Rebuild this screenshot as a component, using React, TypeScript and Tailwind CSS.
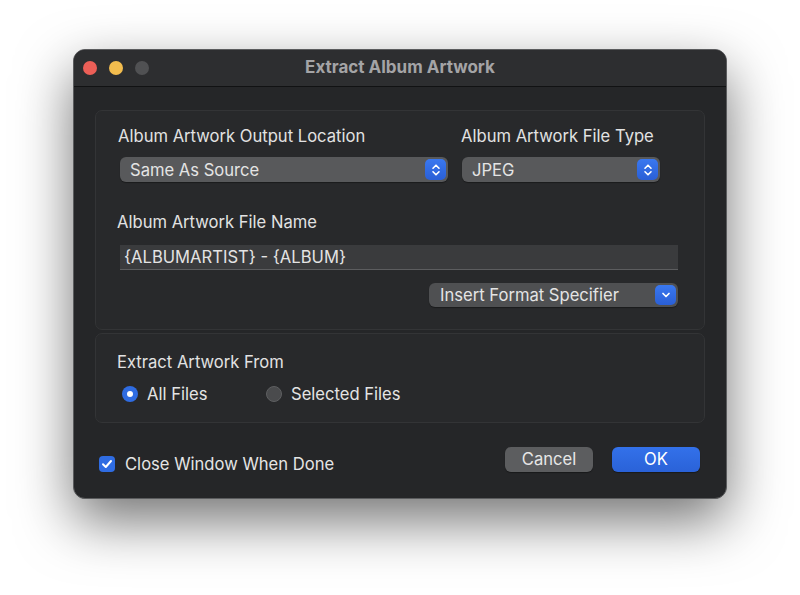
const font = { fontFamily: 'Inter, "Liberation Sans", Arial, sans-serif' };

const Stepper = () => (
	<div className="flex h-[21px] w-[21px] items-center justify-center rounded-[5px] bg-gradient-to-b from-[#3a78f0] to-[#2a5fd6]">
		<svg width="10" height="14" viewBox="0 0 10 14" fill="none">
			<path d="M2 5.2 L5 2.2 L8 5.2" stroke="white" strokeWidth="1.6" strokeLinecap="round" strokeLinejoin="round" />
			<path d="M2 8.8 L5 11.8 L8 8.8" stroke="white" strokeWidth="1.6" strokeLinecap="round" strokeLinejoin="round" />
		</svg>
	</div>
);

const ChevronBtn = () => (
	<div className="flex h-[20px] w-[21px] items-center justify-center rounded-[5px] bg-gradient-to-b from-[#3a78f0] to-[#2a5fd6]">
		<svg width="10" height="8" viewBox="0 0 10 8" fill="none">
			<path d="M2 2.5 L5 5.5 L8 2.5" stroke="white" strokeWidth="1.7" strokeLinecap="round" strokeLinejoin="round" />
		</svg>
	</div>
);

const PopUp = ({ label, width }: { label: string; width: string }) => (
	<div className={`flex h-[25px] items-center justify-between rounded-[6px] bg-[#58595b] pl-[10px] pr-[2px] shadow-[0_1px_1px_rgba(0,0,0,0.35)] ${width}`}>
		<span className="text-[16.6px] leading-[20px] text-[#e4e4e4]">{label}</span>
		<Stepper />
	</div>
);

export default function App() {
	return (
		<div className="h-[595px] w-[800px] bg-white pt-[49px]" style={font}>
			<div className="mx-auto w-[654px] overflow-hidden rounded-[12px] border border-[#5b5c5e] bg-[#252628] shadow-[0_22px_55px_rgba(0,0,0,0.55)]">
				{/* Title bar */}
				<div className="relative flex h-[37px] items-center border-b border-[#111213] bg-[#2d2e30] px-[9px]">
					<div className="flex gap-[12px]">
						<span className="h-[14px] w-[14px] rounded-full bg-[#ec5f57]" />
						<span className="h-[14px] w-[14px] rounded-full bg-[#f3bd4e]" />
						<span className="h-[14px] w-[14px] rounded-full bg-[#505153]" />
					</div>
					<div className="absolute inset-0 flex items-center justify-center pb-[1px] text-[17px] font-bold text-[#a4a4a6]">
						Extract Album Artwork
					</div>
				</div>

				<div className="px-[21px] pt-[23px]">
					{/* Output panel */}
					<div className="h-[220px] rounded-[7px] border border-[#333436] bg-[#28292b] pl-[24px] pr-[26px] pt-[15px]">
						<div className="flex gap-[14px]">
							<div className="w-[328px]">
								<div className="-ml-[2px] text-[16.6px] leading-[20px] text-[#e2e2e2]">Album Artwork Output Location</div>
								<div className="mt-[11px]">
									<PopUp label="Same As Source" width="w-[328px]" />
								</div>
							</div>
							<div className="w-[198px]">
								<div className="-ml-[1px] text-[16.6px] leading-[20px] text-[#e2e2e2]">Album Artwork File Type</div>
								<div className="mt-[11px]">
									<PopUp label="JPEG" width="w-[198px]" />
								</div>
							</div>
						</div>
						<div className="-ml-[3px] mt-[30px] text-[16.6px] leading-[20px] text-[#e2e2e2]">Album Artwork File Name</div>
						<div className="mt-[13px] flex h-[25px] items-center border-b border-[#5c5d5f] bg-[#3a3b3d] pl-[4px] text-[16.6px] text-[#e4e4e4]">
							{"{ALBUMARTIST} - {ALBUM}"}
						</div>
						<div className="mt-[13px] flex justify-end">
							<div className="flex h-[24px] w-[249px] items-center justify-between rounded-[6px] bg-[#4f5052] pl-[11px] pr-[2px] shadow-[0_1px_1px_rgba(0,0,0,0.35)]">
								<span className="text-[16.6px] leading-[20px] text-[#e4e4e4]">Insert Format Specifier</span>
								<ChevronBtn />
							</div>
						</div>
					</div>

					{/* Extract from panel */}
					<div className="mt-[3px] h-[90px] rounded-[7px] border border-[#333436] bg-[#28292b] pl-[21px] pt-[18px]">
						<div className="text-[16.6px] leading-[20px] text-[#e2e2e2]">Extract Artwork From</div>
						<div className="ml-[5px] mt-[12px] flex h-[20px] items-center">
							<span className="flex h-[16px] w-[16px] items-center justify-center rounded-full bg-[#2f6ce2]">
								<span className="h-[6px] w-[6px] rounded-full bg-white" />
							</span>
							<span className="ml-[9px] w-[119px] text-[16.6px] leading-[20px] text-[#e4e4e4]">All Files</span>
							<span className="h-[16px] w-[16px] rounded-full border border-[#5e5f61] bg-[#4a4b4d]" />
							<span className="ml-[9px] text-[16.6px] leading-[20px] text-[#e4e4e4]">Selected Files</span>
						</div>
					</div>
				</div>

				{/* Bottom row */}
				<div className="flex items-start justify-between pb-[24px] pl-[25px] pr-[26px] pt-[24px]">
					<div className="mt-[7px] flex h-[20px] items-center">
						<span className="flex h-[16px] w-[16px] items-center justify-center rounded-[4px] bg-[#2f6ce2]">
							<svg width="12" height="10" viewBox="0 0 12 10" fill="none">
								<path d="M2 5.2 L4.8 8 L10 2" stroke="white" strokeWidth="2" strokeLinecap="round" strokeLinejoin="round" />
							</svg>
						</span>
						<span className="ml-[10px] text-[16.6px] leading-[20px] text-[#e4e4e4]">Close Window When Done</span>
					</div>
					<div className="flex gap-[19px]">
						<button className="h-[25px] w-[88px] rounded-[6px] bg-[#5c5d5f] text-[16.6px] text-[#e6e6e6] shadow-[0_1px_1px_rgba(0,0,0,0.35)]">
							Cancel
						</button>
						<button className="h-[25px] w-[88px] rounded-[6px] bg-gradient-to-b from-[#3371ea] to-[#2a62d8] text-[16.6px] text-white shadow-[0_1px_1px_rgba(0,0,0,0.35)]">
							OK
						</button>
					</div>
				</div>
			</div>
		</div>
	);
}
